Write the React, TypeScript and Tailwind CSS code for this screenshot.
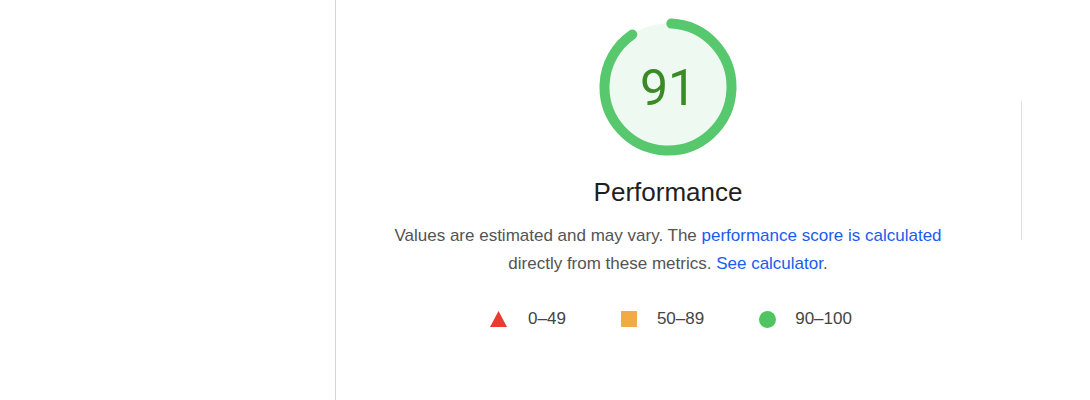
import React from "react";

const SCORE = 91;
const R = 63.5;
const CIRC = 2 * Math.PI * R;

function Gauge({ score }: { score: number }) {
  const arc = (score / 100) * CIRC;
  return (
    <div className="relative w-[138px] h-[138px]">
      <svg width="138" height="138" viewBox="0 0 138 138">
        <circle cx="69" cy="69" r={R} fill="#eef9f1" />
        <circle
          cx="69"
          cy="69"
          r={R}
          fill="none"
          stroke="#57c86d"
          strokeWidth="10"
          strokeLinecap="round"
          strokeDasharray={`${arc - 6} ${CIRC}`}
          transform="rotate(-87 69 69)"
        />
      </svg>
      <div className="absolute inset-0 flex items-center justify-center text-[50px] leading-none text-[#3a8a25] font-['Roboto',sans-serif] pt-[2px]">
        {score}
      </div>
    </div>
  );
}

export default function App() {
  return (
    <div className="w-[1090px] h-[400px] bg-white flex font-['Liberation_Sans',Arial,sans-serif] overflow-hidden">
      {/* Left nav column */}
      <aside className="w-[336px] shrink-0 border-r border-[#d3d6df]" />

      {/* Main content */}
      <main className="w-[664px] shrink-0 flex flex-col items-center pt-[18px]">
        <Gauge score={SCORE} />
        <h2 className="mt-[21px] text-[26px] leading-[30px] text-[#1f1f1f]">Performance</h2>
        <p className="mt-[15px] text-[17px] leading-[28px] text-[#545454] text-center">
          Values are estimated and may vary. The{" "}
          <a className="text-[#1a5cf0]">performance score is calculated</a>
          <br />
          directly from these metrics.{" "}
          <a className="text-[#1a5cf0]">See calculator</a>.
        </p>

        <div className="mt-[29px] flex items-center gap-[55px] text-[17px] leading-[24px] text-[#444] pl-[6px]">
          <div className="flex items-center gap-[21px]">
            <svg width="17" height="16" viewBox="0 0 17 16">
              <polygon points="8.5,0 17,16 0,16" fill="#eb3a2f" />
            </svg>
            <span>0–49</span>
          </div>
          <div className="flex items-center gap-[20px]">
            <span className="w-[16px] h-[16px] bg-[#f4aa44]" />
            <span>50–89</span>
          </div>
          <div className="flex items-center gap-[19px]">
            <span className="w-[17px] h-[17px] rounded-full bg-[#50c463]" />
            <span>90–100</span>
          </div>
        </div>
      </main>

      {/* Scroll divider */}
      <div className="pl-[21px] pt-[101px]">
        <div className="w-px h-[139px] bg-[#e2e2e2]" />
      </div>
    </div>
  );
}
